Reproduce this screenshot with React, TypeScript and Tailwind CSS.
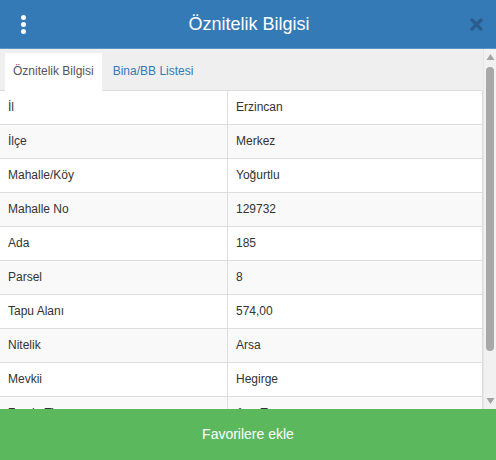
const rows: [string, string][] = [
  ['İl', 'Erzincan'],
  ['İlçe', 'Merkez'],
  ['Mahalle/Köy', 'Yoğurtlu'],
  ['Mahalle No', '129732'],
  ['Ada', '185'],
  ['Parsel', '8'],
  ['Tapu Alanı', '574,00'],
  ['Nitelik', 'Arsa'],
  ['Mevkii', 'Hegirge'],
  ['Zemin Tip', 'Ana Taşınmaz'],
]

const Scrollbar = () => (
  <div className="w-[13px] shrink-0 bg-[#f1f1f1] border-l border-[#e6e6e6] flex flex-col items-center">
    <svg width="9" height="16" viewBox="0 0 9 16" className="shrink-0">
      <path d="M0.5 11 L4.5 5 L8.5 11 Z" fill="#a3a3a3" />
    </svg>
    <div className="mt-[2px] w-[8px] h-[284px] rounded-[4px] bg-[#a8a8a8]" />
    <div className="flex-1" />
    <svg width="9" height="16" viewBox="0 0 9 16" className="shrink-0">
      <path d="M0.5 5 L4.5 11 L8.5 5 Z" fill="#a3a3a3" />
    </svg>
  </div>
)

export default function App() {
  return (
    <div className="w-[496px] h-[460px] flex flex-col font-['Liberation_Sans',Arial,sans-serif] text-[#333] overflow-hidden">
      <header className="h-[49px] shrink-0 bg-[#337ab7] border-b border-[#5b95c8] flex items-center px-[18px]">
        <div className="w-[10px] flex flex-col items-center gap-[2px]">
          <span className="w-[5px] h-[5px] rounded-full bg-white" />
          <span className="w-[5px] h-[5px] rounded-full bg-white" />
          <span className="w-[5px] h-[5px] rounded-full bg-white" />
        </div>
        <h1 className="flex-1 text-center text-[18px] leading-none text-white">Öznitelik Bilgisi</h1>
        <svg width="13" height="13" viewBox="0 0 13 13" className="mr-[-5px]">
          <path d="M2 2 L11 11 M11 2 L2 11" stroke="#2b5d8c" strokeWidth="3.2" strokeLinecap="round" />
        </svg>
      </header>

      <div className="flex-1 min-h-0 flex">
        <div className="flex-1 min-w-0 overflow-hidden bg-white">
          <div className="bg-[#efefef] pt-[4px] pl-[5px] flex text-[12px] leading-[17px] border-b border-[#ddd]">
            <div className="bg-white px-[8px] py-[10px] mb-[-1px] text-[#555]">Öznitelik Bilgisi</div>
            <div className="px-[11px] py-[10px] text-[#337ab7]">Bina/BB Listesi</div>
          </div>
          <div className="border-r border-[#ddd] text-[12px] leading-[17px]">
            {rows.map(([k, v], i) => (
              <div
                key={k}
                className={`flex ${i > 0 ? 'border-t border-[#ddd]' : ''} ${i % 2 === 1 ? 'bg-[#f9f9f9]' : 'bg-white'}`}
              >
                <div className="w-[228px] shrink-0 px-[8px] py-[8px] border-r border-[#ddd]">{k}</div>
                <div className="flex-1 px-[8px] py-[8px]">{v}</div>
              </div>
            ))}
          </div>
        </div>
        <Scrollbar />
      </div>

      <button className="h-[51px] shrink-0 bg-[#5cb85c] text-white text-[14px] w-full">Favorilere ekle</button>
    </div>
  )
}
